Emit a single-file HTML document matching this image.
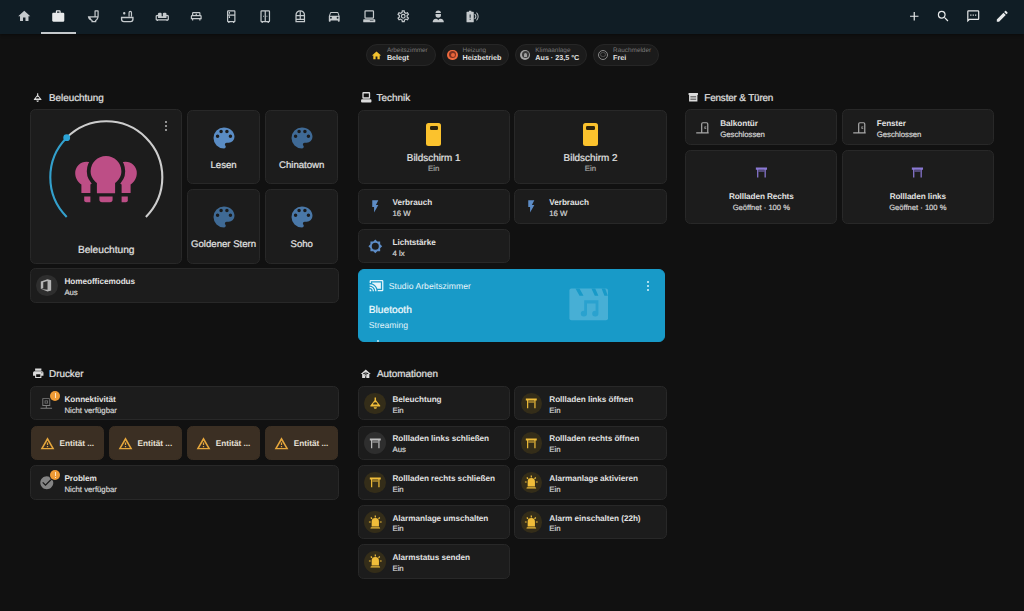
<!DOCTYPE html><html><head><meta charset="utf-8"><style>
html,body{margin:0;padding:0}
body{width:1024px;height:611px;background:#111111;position:relative;overflow:hidden;font-family:"Liberation Sans", sans-serif}
.t{position:absolute;white-space:nowrap;text-rendering:geometricPrecision}
.m{-webkit-text-stroke:0.22px currentColor}
.c{position:absolute;box-sizing:border-box;border:1px solid #2a2a2a}
.i{position:absolute;overflow:visible}
</style></head><body>
<div style="position:absolute;left:0;top:0;width:1024px;height:34px;background:#101d25;box-shadow:0 1px 3px rgba(0,0,0,0.45)"></div>
<svg class="i" style="left:16.95px;top:9.25px;width:14.5px;height:14.5px" viewBox="0 0 24 24"><path fill="#c5cacd" fill-rule="evenodd" d="M10,20V14H14V20H19V12H22L12,3L2,12H5V20H10Z"/></svg>
<svg class="i" style="left:51.35px;top:9.25px;width:14.5px;height:14.5px" viewBox="0 0 24 24"><path fill="#e8eaeb" fill-rule="evenodd" d="M10,2H14A2,2 0 0,1 16,4V6H20A2,2 0 0,1 22,8V19A2,2 0 0,1 20,21H4C2.89,21 2,20.1 2,19V8C2,6.89 2.89,6 4,6H8V4C8,2.89 8.89,2 10,2M14,6V4H10V6H14Z"/></svg>
<svg class="i" style="left:85.75px;top:9.25px;width:14.5px;height:14.5px" viewBox="0 0 24 24"><path fill="#c5cacd" fill-rule="evenodd" d="M9,22H17V19.5C19.4,17.9 21,15.1 21,12V3.5C21,2.7 20.3,2 19.5,2H15.5C14.7,2 14,2.7 14,3.5V12H3C3,15.1 5,18 9,19.5V22M5.3,14H18.7C18.1,15.9 16.8,17.5 15,18.3V20H11V18.3C9.2,17.5 7.9,15.9 7.3,14H5.3M16,4H19V12H16V4Z"/></svg>
<svg class="i" style="left:120.25px;top:9.25px;width:14.5px;height:14.5px" viewBox="0 0 24 24"><path fill="#c5cacd" fill-rule="evenodd" d="M7,5A2,2 0 1,1 7,9A2,2 0 1,1 7,5ZM14,12.5V6A3,3 0 0,1 20,6V12.5H18V6A1,1 0 0,0 16,6V12.5ZM1.5,13H22.5V17A5,5 0 0,1 17.5,22H6.5A5,5 0 0,1 1.5,17ZM3.7,15.2V17A2.8,2.8 0 0,0 6.5,19.8H17.5A2.8,2.8 0 0,0 20.3,17V15.2Z"/></svg>
<svg class="i" style="left:154.75px;top:9.25px;width:14.5px;height:14.5px" viewBox="0 0 24 24"><path fill="#c5cacd" fill-rule="evenodd" d="M7,6H9A2,2 0 0,1 11,8V12H13V8A2,2 0 0,1 15,6H17A2,2 0 0,1 19,8V10A2,2 0 0,1 21,10A2,2 0 0,1 23,12V17A2,2 0 0,1 21,19V20H19V19H5V20H3V19A2,2 0 0,1 1,17V12A2,2 0 0,1 3,10A2,2 0 0,1 5,10V8A2,2 0 0,1 7,6M3,12V17H21V12H19V15H5V12H3Z"/></svg>
<svg class="i" style="left:189.25px;top:9.25px;width:14.5px;height:14.5px" viewBox="0 0 24 24"><path fill="#c5cacd" fill-rule="evenodd" d="M7,5H17A2,2 0 0,1 19,7V10A2,2 0 0,1 21,12V17H19V19H17V17H7V19H5V17H3V12A2,2 0 0,1 5,10V7A2,2 0 0,1 7,5M7,7V10H11V8H13V10H17V7H7M5,12V15H19V12H5Z"/></svg>
<svg class="i" style="left:223.75px;top:9.25px;width:14.5px;height:14.5px" viewBox="0 0 24 24"><path fill="#c5cacd" fill-rule="evenodd" d="M7,2H17A2,2 0 0,1 19,4V20A2,2 0 0,1 17,22V23H15V22H9V23H7V22A2,2 0 0,1 5,20V4A2,2 0 0,1 7,2M7,4V9H17V4H7M7,11V20H17V11H7M8,5H10V8H8V5M8,12H10V15H8V12Z"/></svg>
<svg class="i" style="left:258.25px;top:9.25px;width:14.5px;height:14.5px" viewBox="0 0 24 24"><path fill="#c5cacd" fill-rule="evenodd" d="M6,2H18A2,2 0 0,1 20,4V20A2,2 0 0,1 18,22V23H16V22H8V23H6V22A2,2 0 0,1 4,20V4A2,2 0 0,1 6,2M6,4V20H11V4H6M13,4V20H18V4H13M8.5,11H10V13H8.5V11M14,11H15.5V13H14V11Z"/></svg>
<svg class="i" style="left:292.75px;top:9.25px;width:14.5px;height:14.5px" viewBox="0 0 24 24"><path fill="#c5cacd" fill-rule="evenodd" d="M12,2A8,8 0 0,0 4,10V22H20V10A8,8 0 0,0 12,2M11,4.1V10H6.1A6,6 0 0,1 11,4.1M13,4.1A6,6 0 0,1 17.9,10H13V4.1M6,12H11V16H6V12M13,12H18V16H13V12M6,18H18V20H6V18Z"/></svg>
<svg class="i" style="left:327.25px;top:9.25px;width:14.5px;height:14.5px" viewBox="0 0 24 24"><path fill="#c5cacd" fill-rule="evenodd" d="M5,11L6.5,6.5H17.5L19,11M17.5,16A1.5,1.5 0 0,1 16,14.5A1.5,1.5 0 0,1 17.5,13A1.5,1.5 0 0,1 19,14.5A1.5,1.5 0 0,1 17.5,16M6.5,16A1.5,1.5 0 0,1 5,14.5A1.5,1.5 0 0,1 6.5,13A1.5,1.5 0 0,1 8,14.5A1.5,1.5 0 0,1 6.5,16M18.92,6C18.72,5.42 18.16,5 17.5,5H6.5C5.84,5 5.28,5.42 5.08,6L3,12V20A1,1 0 0,0 4,21H5A1,1 0 0,0 6,20V19H18V20A1,1 0 0,0 19,21H20A1,1 0 0,0 21,20V12L18.92,6Z"/></svg>
<svg class="i" style="left:361.75px;top:9.25px;width:14.5px;height:14.5px" viewBox="0 0 24 24"><path fill="#c5cacd" fill-rule="evenodd" d="M6,2H18A2,2 0 0,1 20,4V14A2,2 0 0,1 18,16H6A2,2 0 0,1 4,14V4A2,2 0 0,1 6,2M6,4V14H18V4H6M3,17H21A1,1 0 0,1 22,18V21A1,1 0 0,1 21,22H3A1,1 0 0,1 2,21V18A1,1 0 0,1 3,17M13,19V20H19V19H13Z"/></svg>
<svg class="i" style="left:396.25px;top:9.25px;width:14.5px;height:14.5px" viewBox="0 0 24 24"><path fill="#c5cacd" fill-rule="evenodd" d="M12,8A4,4 0 0,1 16,12A4,4 0 0,1 12,16A4,4 0 0,1 8,12A4,4 0 0,1 12,8M12,10A2,2 0 0,0 10,12A2,2 0 0,0 12,14A2,2 0 0,0 14,12A2,2 0 0,0 12,10M10,22C9.75,22 9.54,21.82 9.5,21.58L9.13,18.93C8.5,18.68 7.96,18.34 7.44,17.94L4.95,18.95C4.73,19.03 4.46,18.95 4.34,18.73L2.34,15.27C2.21,15.05 2.27,14.78 2.46,14.63L4.57,12.97L4.5,12L4.57,11L2.46,9.37C2.27,9.22 2.21,8.95 2.34,8.73L4.34,5.27C4.46,5.05 4.73,4.96 4.95,5.05L7.44,6.05C7.96,5.66 8.5,5.32 9.13,5.07L9.5,2.42C9.54,2.18 9.75,2 10,2H14C14.25,2 14.46,2.18 14.5,2.42L14.87,5.07C15.5,5.32 16.04,5.66 16.56,6.05L19.05,5.05C19.27,4.96 19.54,5.05 19.66,5.27L21.66,8.73C21.79,8.95 21.73,9.22 21.54,9.37L19.43,11L19.5,12L19.43,13L21.54,14.63C21.73,14.78 21.79,15.05 21.66,15.27L19.66,18.73C19.54,18.95 19.27,19.04 19.05,18.95L16.56,17.95C16.04,18.34 15.5,18.68 14.87,18.93L14.5,21.58C14.46,21.82 14.25,22 14,22H10M11.25,4L10.88,6.61C9.68,6.86 8.62,7.5 7.85,8.39L5.44,7.35L4.69,8.65L6.8,10.2C6.4,11.37 6.4,12.64 6.8,13.8L4.68,15.36L5.43,16.66L7.86,15.62C8.63,16.5 9.68,17.14 10.87,17.38L11.24,20H12.76L13.13,17.39C14.32,17.14 15.37,16.5 16.14,15.62L18.57,16.66L19.32,15.36L17.2,13.81C17.6,12.64 17.6,11.37 17.2,10.2L19.31,8.65L18.56,7.35L16.15,8.39C15.38,7.5 14.32,6.86 13.12,6.62L12.75,4H11.25Z"/></svg>
<svg class="i" style="left:430.75px;top:9.25px;width:14.5px;height:14.5px" viewBox="0 0 24 24"><path fill="#c5cacd" fill-rule="evenodd" d="M12,2.5A4.5,4.5 0 0,1 16.5,7V10A4.5,4.5 0 0,1 12,14.5A4.5,4.5 0 0,1 7.5,10V7A4.5,4.5 0 0,1 12,2.5ZM7.5,6.8V8.2H16.5V6.8ZM2.8,22A5.2,5.2 0 0,1 8.2,16.3A4.2,4.2 0 0,1 12,18.6A4.2,4.2 0 0,1 15.8,16.3A5.2,5.2 0 0,1 21.2,22Z"/></svg>
<svg class="i" style="left:465.25px;top:9.25px;width:14.5px;height:14.5px" viewBox="0 0 24 24"><path fill="#c5cacd" fill-rule="evenodd" d="M3.5,4.5H6.5V2.8H10.5V4.5H13.5A1,1 0 0,1 14.5,5.5V21A1,1 0 0,1 13.5,22H3.5A1,1 0 0,1 2.5,21V5.5A1,1 0 0,1 3.5,4.5ZM7.7,9V14.5H9.3V9ZM7.7,16.2V17.8H9.3V16.2ZM16.5,8C18,9.2 18.8,10.8 18.8,12.5C18.8,14.2 18,15.8 16.5,17L15.5,15.9C16.6,15 17.2,13.8 17.2,12.5C17.2,11.2 16.6,10 15.5,9.1ZM19.5,5.5C21.5,7.3 22.5,9.8 22.5,12.5C22.5,15.2 21.5,17.7 19.5,19.5L18.4,18.4C20.1,16.9 20.9,14.8 20.9,12.5C20.9,10.2 20.1,8.1 18.4,6.6Z"/></svg>
<div style="position:absolute;left:41px;top:32px;width:35px;height:2px;background:#c4c8cb"></div>
<svg class="i" style="left:906.55px;top:9.35px;width:14.5px;height:14.5px" viewBox="0 0 24 24"><path fill="#e6e8e9" fill-rule="evenodd" d="M19,13H13V19H11V13H5V11H11V5H13V11H19V13Z"/></svg>
<svg class="i" style="left:935.75px;top:9.35px;width:14.5px;height:14.5px" viewBox="0 0 24 24"><path fill="#e6e8e9" fill-rule="evenodd" d="M9.5,3A6.5,6.5 0 0,1 16,9.5C16,11.11 15.41,12.59 14.44,13.73L14.71,14H15.5L20.5,19L19,20.5L14,15.5V14.71L13.73,14.44C12.59,15.41 11.11,16 9.5,16A6.5,6.5 0 0,1 3,9.5A6.5,6.5 0 0,1 9.5,3M9.5,5C7,5 5,7 5,9.5C5,12 7,14 9.5,14C12,14 14,12 14,9.5C14,7 12,5 9.5,5Z"/></svg>
<svg class="i" style="left:965.75px;top:9.35px;width:14.5px;height:14.5px" viewBox="0 0 24 24"><path fill="#e6e8e9" fill-rule="evenodd" d="M20,2H4A2,2 0 0,0 2,4V22L6,18H20A2,2 0 0,0 22,16V4A2,2 0 0,0 20,2M20,16H5.17L4,17.17V4H20V16M17,11H15V9H17V11M13,11H11V9H13V11M9,11H7V9H9V11Z"/></svg>
<svg class="i" style="left:994.95px;top:9.35px;width:14.5px;height:14.5px" viewBox="0 0 24 24"><path fill="#e6e8e9" fill-rule="evenodd" d="M20.71,7.04C21.1,6.65 21.1,6 20.71,5.63L18.37,3.29C18,2.9 17.35,2.9 16.96,3.29L15.12,5.12L18.87,8.87M3,17.25V21H6.75L17.81,9.93L14.06,6.18L3,17.25Z"/></svg>
<div class="c" style="left:366.3px;top:44.4px;width:69.5px;height:21.4px;border-radius:11px;background:#1b1b1b;border-color:#262626"></div>
<svg class="i" style="left:371.30px;top:49.50px;width:11px;height:11px" viewBox="0 0 24 24"><path fill="#f2c12e" fill-rule="evenodd" d="M10,20V14H14V20H19V12H22L12,3L2,12H5V20H10Z"/></svg>
<div class="t" style="left:386.90px;top:48.00px;font-size:6.4px;line-height:6.4px;color:#7a7a7a;font-weight:400;letter-spacing:0px;">Arbeitszimmer</div>
<div class="t" style="left:386.90px;top:54.00px;font-size:7.2px;line-height:7.2px;color:#e4e4e4;font-weight:700;letter-spacing:0px;">Belegt</div>
<div class="c" style="left:442.0px;top:44.4px;width:67.2px;height:21.4px;border-radius:11px;background:#1b1b1b;border-color:#262626"></div>
<div class="c" style="left:447.40px;top:49.70px;width:10.20px;height:10.20px;background:#ee6a3e;border:none;border-radius:50%"></div>
<div class="c" style="left:448.90px;top:51.20px;width:7.20px;height:7.20px;background:#7a3020;border:none;border-radius:50%"></div>
<div class="c" style="left:450.50px;top:53.20px;width:4.00px;height:4.00px;background:#e8643a;border:none;border-radius:50%"></div>
<div class="t" style="left:462.60px;top:48.00px;font-size:6.4px;line-height:6.4px;color:#7a7a7a;font-weight:400;letter-spacing:0px;">Heizung</div>
<div class="t" style="left:462.60px;top:54.00px;font-size:7.2px;line-height:7.2px;color:#e4e4e4;font-weight:700;letter-spacing:0px;">Heizbetrieb</div>
<div class="c" style="left:514.7px;top:44.4px;width:72.3px;height:21.4px;border-radius:11px;background:#1b1b1b;border-color:#262626"></div>
<div class="c" style="left:520.10px;top:49.70px;width:10.20px;height:10.20px;background:#a4a4a4;border:none;border-radius:50%"></div>
<div class="c" style="left:521.70px;top:51.30px;width:7.00px;height:7.00px;background:#3a3a3a;border:none;border-radius:50%"></div>
<div class="c" style="left:523.70px;top:52.6px;width:3px;height:4.6px;border-radius:1.5px 1.5px 0.6px 0.6px;background:#a0a0a0;border:none"></div>
<div class="t" style="left:535.30px;top:48.00px;font-size:6.4px;line-height:6.4px;color:#7a7a7a;font-weight:400;letter-spacing:0px;">Klimaanlage</div>
<div class="t" style="left:535.30px;top:54.00px;font-size:7.2px;line-height:7.2px;color:#e4e4e4;font-weight:700;letter-spacing:0px;">Aus · 23,5 °C</div>
<div class="c" style="left:592.5px;top:44.4px;width:66.4px;height:21.4px;border-radius:11px;background:#1b1b1b;border-color:#262626"></div>
<div class="c" style="left:597.90px;top:49.7px;width:10.2px;height:10.2px;border-radius:50%;border:1.3px solid #8a8a8a;background:transparent"></div>
<div class="c" style="left:600.40px;top:52.2px;width:5.2px;height:5.2px;border-radius:50%;border:1px solid #505050;background:transparent"></div>
<div class="t" style="left:613.10px;top:48.00px;font-size:6.4px;line-height:6.4px;color:#7a7a7a;font-weight:400;letter-spacing:0px;">Rauchmelder</div>
<div class="t" style="left:613.10px;top:54.00px;font-size:7.2px;line-height:7.2px;color:#e4e4e4;font-weight:700;letter-spacing:0px;">Frei</div>
<svg class="i" style="left:32.45px;top:91.55px;width:11.3px;height:11.3px" viewBox="0 0 24 24"><path fill="#dcdcdc" fill-rule="evenodd" d="M10.8,2.5H13.2V7L20,15.6C20.5,16.3 20.1,17.2 19.2,17.2H4.8C3.9,17.2 3.5,16.3 4,15.6L10.8,7V2.5M12,10.3C10.1,10.3 8.6,11.8 8.3,13.9H15.7C15.4,11.8 13.9,10.3 12,10.3M9.3,18.3H14.7A2.7,2.7 0 0,1 12,21A2.7,2.7 0 0,1 9.3,18.3Z"/></svg>
<div class="t m" style="left:48.90px;top:94.00px;font-size:9.9px;line-height:9.9px;color:#e1e1e1;font-weight:400;letter-spacing:0px;">Beleuchtung</div>
<svg class="i" style="left:359.85px;top:91.15px;width:12.5px;height:12.5px" viewBox="0 0 24 24"><path fill="#dcdcdc" fill-rule="evenodd" d="M6.5,2H17.5A2,2 0 0,1 19.5,4V13A2,2 0 0,1 17.5,15H6.5A2,2 0 0,1 4.5,13V4A2,2 0 0,1 6.5,2M7,5V12H17V5H7M4,16H20A2,2 0 0,1 22,18V20A2,2 0 0,1 20,22H4A2,2 0 0,1 2,20V18A2,2 0 0,1 4,16Z"/></svg>
<div class="t m" style="left:376.60px;top:94.00px;font-size:9.9px;line-height:9.9px;color:#e1e1e1;font-weight:400;letter-spacing:0px;">Technik</div>
<svg class="i" style="left:687.35px;top:91.45px;width:12.5px;height:12.5px" viewBox="0 0 24 24"><path fill="#dcdcdc" fill-rule="evenodd" d="M3,4H21V7.5H20V20H4V7.5H3V4M6.5,10V11H17.5V10H6.5M6.5,13V14H17.5V13H6.5M6.5,16V17H17.5V16H6.5Z"/></svg>
<div class="t m" style="left:704.30px;top:94.00px;font-size:9.9px;line-height:9.9px;color:#e1e1e1;font-weight:400;letter-spacing:-0.15px;">Fenster &amp; Türen</div>
<svg class="i" style="left:31.85px;top:367.05px;width:12.5px;height:12.5px" viewBox="0 0 24 24"><path fill="#dcdcdc" fill-rule="evenodd" d="M18,3H6V7H18M19,12A1,1 0 0,1 18,11A1,1 0 0,1 19,10A1,1 0 0,1 20,11A1,1 0 0,1 19,12M16,19H8V14H16M19,8H5A3,3 0 0,0 2,11V17H6V21H18V17H22V11A3,3 0 0,0 19,8Z"/></svg>
<div class="t m" style="left:49.00px;top:370.00px;font-size:9.9px;line-height:9.9px;color:#e1e1e1;font-weight:400;letter-spacing:0px;">Drucker</div>
<svg class="i" style="left:360.05px;top:367.55px;width:11.5px;height:11.5px" viewBox="0 0 24 24"><path fill="#dcdcdc" fill-rule="evenodd" d="M12,3L1.5,12.5H4.5V21H19.5V12.5H22.5L12,3M12,9.5C14.3,9.5 16.4,10.4 17.9,11.9L16.5,13.3C15.3,12.2 13.7,11.5 12,11.5C10.3,11.5 8.7,12.2 7.5,13.3L6.1,11.9C7.6,10.4 9.7,9.5 12,9.5M12,13.2C13.2,13.2 14.3,13.7 15.1,14.5L13.7,15.9C13.3,15.5 12.7,15.2 12,15.2C11.3,15.2 10.7,15.5 10.3,15.9L8.9,14.5C9.7,13.7 10.8,13.2 12,13.2M10.8,17H13.2V21H10.8V17Z"/></svg>
<div class="t m" style="left:377.00px;top:370.00px;font-size:9.9px;line-height:9.9px;color:#e1e1e1;font-weight:400;letter-spacing:0px;">Automationen</div>
<div class="c" style="left:29.50px;top:109.30px;width:152.20px;height:154.30px;background:#1c1c1c;border-color:#282828;border-radius:5.5px;"></div>
<svg class="i" style="left:0.00px;top:0.00px;width:1024px;height:611px;left:0;top:0" viewBox="0 0 1024 611"><path d="M66.70,216.90 A56,56 0 0,1 66.70,137.70" stroke="#33a0cc" stroke-width="2.1" fill="none"/><path d="M66.70,137.70 A56,56 0 1,1 145.90,216.90" stroke="#cdcdcd" stroke-width="2.1" fill="none"/><circle cx="66.70" cy="137.70" r="3.4" fill="#2ba3d6"/></svg>
<div class="c" style="left:165.10px;top:121.20px;width:2.20px;height:2.20px;background:#b8b8b8;border:none;border-radius:50%"></div>
<div class="c" style="left:165.10px;top:124.90px;width:2.20px;height:2.20px;background:#b8b8b8;border:none;border-radius:50%"></div>
<div class="c" style="left:165.10px;top:128.60px;width:2.20px;height:2.20px;background:#b8b8b8;border:none;border-radius:50%"></div>
<svg class="i" style="left:0.00px;top:0.00px;width:1024px;height:611px;left:0;top:0" viewBox="0 0 1024 611">
<g fill="#bd4e86">
 <path d="M81.4,193 V184.5 C77.5,182 75.2,177.8 75.2,173 A11.3,11.3 0 0,1 97.8,173 C97.8,177 95,181 90.4,184.5 V193 Z"/>
 <path d="M130.6,193 V184.5 C134.5,182 136.8,177.8 136.8,173 A11.3,11.3 0 0,0 114.2,173 C114.2,177 117,181 121.6,184.5 V193 Z"/>
 <path d="M84.2,196.5 H90.4 V202.2 H86.2 A2,2 0 0,1 84.2,200.2 Z"/>
 <path d="M127.8,196.5 H121.6 V202.2 H125.8 A2,2 0 0,0 127.8,200.2 Z"/>
</g>
<path d="M106,155.9 A15.4,15.4 0 0,1 121.4,171.3 C121.4,176.5 118.5,180.5 115.1,183 V193.2 H96.9 V183 C93.5,180.5 90.6,176.5 90.6,171.3 A15.4,15.4 0 0,1 106,155.9 Z" fill="#bd4e86" stroke="#1c1c1c" stroke-width="7.6" paint-order="stroke"/>
<path d="M99.4,196.5 H112.6 V199.5 A2.7,2.7 0 0,1 109.9,202.2 H102.1 A2.7,2.7 0 0,1 99.4,199.5 Z" fill="#bd4e86"/>
</svg>
<div class="t m" style="left:-43.80px;width:300px;text-align:center;top:246.00px;font-size:10.2px;line-height:10.2px;color:#e1e1e1;font-weight:400;letter-spacing:0px;">Beleuchtung</div>
<div class="c" style="left:186.80px;top:109.80px;width:73.60px;height:74.60px;background:#1c1c1c;border-color:#282828;border-radius:5.5px;"></div>
<svg class="i" style="left:209.60px;top:124.00px;width:28px;height:28px" viewBox="0 0 24 24"><path fill="#5a8cc4" fill-rule="evenodd" d="M17.5,12A1.5,1.5 0 0,1 16,10.5A1.5,1.5 0 0,1 17.5,9A1.5,1.5 0 0,1 19,10.5A1.5,1.5 0 0,1 17.5,12M14.5,8A1.5,1.5 0 0,1 13,6.5A1.5,1.5 0 0,1 14.5,5A1.5,1.5 0 0,1 16,6.5A1.5,1.5 0 0,1 14.5,8M9.5,8A1.5,1.5 0 0,1 8,6.5A1.5,1.5 0 0,1 9.5,5A1.5,1.5 0 0,1 11,6.5A1.5,1.5 0 0,1 9.5,8M6.5,12A1.5,1.5 0 0,1 5,10.5A1.5,1.5 0 0,1 6.5,9A1.5,1.5 0 0,1 8,10.5A1.5,1.5 0 0,1 6.5,12M12,3A9,9 0 0,0 3,12A9,9 0 0,0 12,21A1.5,1.5 0 0,0 13.5,19.5C13.5,19.11 13.35,18.76 13.11,18.5C12.88,18.23 12.73,17.88 12.73,17.5A1.5,1.5 0 0,1 14.23,16H16A5,5 0 0,0 21,11C21,6.58 16.97,3 12,3Z"/></svg>
<div class="t m" style="left:73.60px;width:300px;text-align:center;top:161.00px;font-size:9.6px;line-height:9.6px;color:#e1e1e1;font-weight:400;letter-spacing:0px;">Lesen</div>
<div class="c" style="left:264.90px;top:109.80px;width:73.60px;height:74.60px;background:#1c1c1c;border-color:#282828;border-radius:5.5px;"></div>
<svg class="i" style="left:287.70px;top:124.00px;width:28px;height:28px" viewBox="0 0 24 24"><path fill="#3f6a96" fill-rule="evenodd" d="M17.5,12A1.5,1.5 0 0,1 16,10.5A1.5,1.5 0 0,1 17.5,9A1.5,1.5 0 0,1 19,10.5A1.5,1.5 0 0,1 17.5,12M14.5,8A1.5,1.5 0 0,1 13,6.5A1.5,1.5 0 0,1 14.5,5A1.5,1.5 0 0,1 16,6.5A1.5,1.5 0 0,1 14.5,8M9.5,8A1.5,1.5 0 0,1 8,6.5A1.5,1.5 0 0,1 9.5,5A1.5,1.5 0 0,1 11,6.5A1.5,1.5 0 0,1 9.5,8M6.5,12A1.5,1.5 0 0,1 5,10.5A1.5,1.5 0 0,1 6.5,9A1.5,1.5 0 0,1 8,10.5A1.5,1.5 0 0,1 6.5,12M12,3A9,9 0 0,0 3,12A9,9 0 0,0 12,21A1.5,1.5 0 0,0 13.5,19.5C13.5,19.11 13.35,18.76 13.11,18.5C12.88,18.23 12.73,17.88 12.73,17.5A1.5,1.5 0 0,1 14.23,16H16A5,5 0 0,0 21,11C21,6.58 16.97,3 12,3Z"/></svg>
<div class="t m" style="left:151.70px;width:300px;text-align:center;top:161.00px;font-size:9.6px;line-height:9.6px;color:#e1e1e1;font-weight:400;letter-spacing:0px;">Chinatown</div>
<div class="c" style="left:186.80px;top:189.00px;width:73.60px;height:74.60px;background:#1c1c1c;border-color:#282828;border-radius:5.5px;"></div>
<svg class="i" style="left:209.60px;top:203.20px;width:28px;height:28px" viewBox="0 0 24 24"><path fill="#3f6a95" fill-rule="evenodd" d="M17.5,12A1.5,1.5 0 0,1 16,10.5A1.5,1.5 0 0,1 17.5,9A1.5,1.5 0 0,1 19,10.5A1.5,1.5 0 0,1 17.5,12M14.5,8A1.5,1.5 0 0,1 13,6.5A1.5,1.5 0 0,1 14.5,5A1.5,1.5 0 0,1 16,6.5A1.5,1.5 0 0,1 14.5,8M9.5,8A1.5,1.5 0 0,1 8,6.5A1.5,1.5 0 0,1 9.5,5A1.5,1.5 0 0,1 11,6.5A1.5,1.5 0 0,1 9.5,8M6.5,12A1.5,1.5 0 0,1 5,10.5A1.5,1.5 0 0,1 6.5,9A1.5,1.5 0 0,1 8,10.5A1.5,1.5 0 0,1 6.5,12M12,3A9,9 0 0,0 3,12A9,9 0 0,0 12,21A1.5,1.5 0 0,0 13.5,19.5C13.5,19.11 13.35,18.76 13.11,18.5C12.88,18.23 12.73,17.88 12.73,17.5A1.5,1.5 0 0,1 14.23,16H16A5,5 0 0,0 21,11C21,6.58 16.97,3 12,3Z"/></svg>
<div class="t m" style="left:73.60px;width:300px;text-align:center;top:240.00px;font-size:9.6px;line-height:9.6px;color:#e1e1e1;font-weight:400;letter-spacing:0px;">Goldener Stern</div>
<div class="c" style="left:264.90px;top:189.00px;width:73.60px;height:74.60px;background:#1c1c1c;border-color:#282828;border-radius:5.5px;"></div>
<svg class="i" style="left:287.70px;top:203.20px;width:28px;height:28px" viewBox="0 0 24 24"><path fill="#4a78a8" fill-rule="evenodd" d="M17.5,12A1.5,1.5 0 0,1 16,10.5A1.5,1.5 0 0,1 17.5,9A1.5,1.5 0 0,1 19,10.5A1.5,1.5 0 0,1 17.5,12M14.5,8A1.5,1.5 0 0,1 13,6.5A1.5,1.5 0 0,1 14.5,5A1.5,1.5 0 0,1 16,6.5A1.5,1.5 0 0,1 14.5,8M9.5,8A1.5,1.5 0 0,1 8,6.5A1.5,1.5 0 0,1 9.5,5A1.5,1.5 0 0,1 11,6.5A1.5,1.5 0 0,1 9.5,8M6.5,12A1.5,1.5 0 0,1 5,10.5A1.5,1.5 0 0,1 6.5,9A1.5,1.5 0 0,1 8,10.5A1.5,1.5 0 0,1 6.5,12M12,3A9,9 0 0,0 3,12A9,9 0 0,0 12,21A1.5,1.5 0 0,0 13.5,19.5C13.5,19.11 13.35,18.76 13.11,18.5C12.88,18.23 12.73,17.88 12.73,17.5A1.5,1.5 0 0,1 14.23,16H16A5,5 0 0,0 21,11C21,6.58 16.97,3 12,3Z"/></svg>
<div class="t m" style="left:151.70px;width:300px;text-align:center;top:240.00px;font-size:9.6px;line-height:9.6px;color:#e1e1e1;font-weight:400;letter-spacing:0px;">Soho</div>
<div class="c" style="left:29.50px;top:268.30px;width:309.00px;height:34.30px;background:#1c1c1c;border-color:#282828;border-radius:5.5px;"></div>
<div class="c" style="left:35.80px;top:274.70px;width:21.80px;height:21.80px;background:#2e2e2e;border:none;border-radius:50%"></div>
<svg class="i" style="left:39.40px;top:278.30px;width:14.6px;height:14.6px" viewBox="0 0 24 24"><path fill="#b4b4b4" fill-rule="evenodd" d="M3,18L7,16.75V7L14,5V19.5L3.5,18.25L14,22L20,20.75V3.5L13.95,2L3,5.75V18Z"/></svg>
<div class="t" style="left:64.40px;top:278.00px;font-size:8.2px;line-height:8.2px;color:#e1e1e1;font-weight:700;letter-spacing:-0.05px;">Homeofficemodus</div>
<div class="t m" style="left:64.40px;top:289.00px;font-size:7.8px;line-height:7.8px;color:#d2d2d2;font-weight:400;letter-spacing:-0.03px;">Aus</div>
<div class="c" style="left:29.50px;top:385.70px;width:309.00px;height:34.30px;background:#1c1c1c;border-color:#282828;border-radius:5.5px;"></div>
<svg class="i" style="left:39.40px;top:396.30px;width:14.6px;height:14.6px" viewBox="0 0 24 24"><path fill="#7e7e7e" fill-rule="evenodd" d="M5.5,3.5H18.5V16.5H12.8V19.5H21.5V20.8H2.5V19.5H11.2V16.5H5.5V3.5ZM7,5V15H17V5ZM9.3,7.5H14.7V12.5H9.3ZM10.5,8.7V11.3H13.5V8.7Z"/></svg>
<div class="c" style="left:49.20px;top:389.80px;width:12.00px;height:12.00px;background:#1c1c1c;border:none;border-radius:50%"></div>
<div class="c" style="left:50.20px;top:390.80px;width:10.00px;height:10.00px;background:#ee9b36;border:none;border-radius:50%"></div>
<div class="c" style="left:54.65px;top:393.20px;width:1.1px;height:3.4px;background:#fde2c0;border:none"></div>
<div class="c" style="left:54.65px;top:397.40px;width:1.1px;height:1.1px;background:#fde2c0;border:none"></div>
<div class="t" style="left:64.40px;top:396.00px;font-size:8.2px;line-height:8.2px;color:#e1e1e1;font-weight:700;letter-spacing:-0.05px;">Konnektivität</div>
<div class="t m" style="left:64.40px;top:407.00px;font-size:7.8px;line-height:7.8px;color:#d2d2d2;font-weight:400;letter-spacing:-0.03px;">Nicht verfügbar</div>
<div class="c" style="left:30.50px;top:426.30px;width:73.30px;height:34.00px;background:#3b2f23;border-color:#3b2f23;border-radius:5.5px;"></div>
<svg class="i" style="left:39.80px;top:435.50px;width:15px;height:15px" viewBox="0 0 24 24"><path fill="#e6a73c" fill-rule="evenodd" d="M12,2L1,21H23ZM12,7.3L5,19H19ZM11,10.5H13V14.5H11ZM11,16H13V18H11Z"/></svg>
<div class="t" style="left:59.50px;top:440.00px;font-size:8.2px;line-height:8.2px;color:#e8e0d6;font-weight:700;letter-spacing:0px;">Entität ...</div>
<div class="c" style="left:108.60px;top:426.30px;width:73.30px;height:34.00px;background:#3b2f23;border-color:#3b2f23;border-radius:5.5px;"></div>
<svg class="i" style="left:117.90px;top:435.50px;width:15px;height:15px" viewBox="0 0 24 24"><path fill="#e6a73c" fill-rule="evenodd" d="M12,2L1,21H23ZM12,7.3L5,19H19ZM11,10.5H13V14.5H11ZM11,16H13V18H11Z"/></svg>
<div class="t" style="left:137.60px;top:440.00px;font-size:8.2px;line-height:8.2px;color:#e8e0d6;font-weight:700;letter-spacing:0px;">Entität ...</div>
<div class="c" style="left:186.70px;top:426.30px;width:73.30px;height:34.00px;background:#3b2f23;border-color:#3b2f23;border-radius:5.5px;"></div>
<svg class="i" style="left:196.00px;top:435.50px;width:15px;height:15px" viewBox="0 0 24 24"><path fill="#e6a73c" fill-rule="evenodd" d="M12,2L1,21H23ZM12,7.3L5,19H19ZM11,10.5H13V14.5H11ZM11,16H13V18H11Z"/></svg>
<div class="t" style="left:215.70px;top:440.00px;font-size:8.2px;line-height:8.2px;color:#e8e0d6;font-weight:700;letter-spacing:0px;">Entität ...</div>
<div class="c" style="left:264.80px;top:426.30px;width:73.30px;height:34.00px;background:#3b2f23;border-color:#3b2f23;border-radius:5.5px;"></div>
<svg class="i" style="left:274.10px;top:435.50px;width:15px;height:15px" viewBox="0 0 24 24"><path fill="#e6a73c" fill-rule="evenodd" d="M12,2L1,21H23ZM12,7.3L5,19H19ZM11,10.5H13V14.5H11ZM11,16H13V18H11Z"/></svg>
<div class="t" style="left:293.80px;top:440.00px;font-size:8.2px;line-height:8.2px;color:#e8e0d6;font-weight:700;letter-spacing:0px;">Entität ...</div>
<div class="c" style="left:29.50px;top:465.40px;width:309.00px;height:34.30px;background:#1c1c1c;border-color:#282828;border-radius:5.5px;"></div>
<svg class="i" style="left:38.90px;top:474.90px;width:15.6px;height:15.6px" viewBox="0 0 24 24"><path fill="#858585" fill-rule="evenodd" d="M12 2C6.5 2 2 6.5 2 12S6.5 22 12 22 22 17.5 22 12 17.5 2 12 2M10 17L5 12L6.41 10.59L10 14.17L17.59 6.58L19 8L10 17Z"/></svg>
<div class="c" style="left:49.20px;top:468.90px;width:12.00px;height:12.00px;background:#1c1c1c;border:none;border-radius:50%"></div>
<div class="c" style="left:50.20px;top:469.90px;width:10.00px;height:10.00px;background:#ee9b36;border:none;border-radius:50%"></div>
<div class="c" style="left:54.65px;top:472.30px;width:1.1px;height:3.4px;background:#fde2c0;border:none"></div>
<div class="c" style="left:54.65px;top:476.50px;width:1.1px;height:1.1px;background:#fde2c0;border:none"></div>
<div class="t" style="left:64.40px;top:475.00px;font-size:8.2px;line-height:8.2px;color:#e1e1e1;font-weight:700;letter-spacing:-0.05px;">Problem</div>
<div class="t m" style="left:64.40px;top:486.00px;font-size:7.8px;line-height:7.8px;color:#d2d2d2;font-weight:400;letter-spacing:-0.03px;">Nicht verfügbar</div>
<div class="c" style="left:357.60px;top:109.80px;width:152.20px;height:74.60px;background:#1c1c1c;border-color:#282828;border-radius:5.5px;"></div>
<div class="c" style="left:425.90px;top:123px;width:15.6px;height:23.2px;border-radius:2.5px;background:#fbc22d;border:none"></div>
<div class="c" style="left:429.60px;top:126.3px;width:8.2px;height:3.4px;border-radius:1.3px;background:#2e240c;border:none"></div>
<div class="t m" style="left:283.70px;width:300px;text-align:center;top:154.00px;font-size:9.9px;line-height:9.9px;color:#e1e1e1;font-weight:400;letter-spacing:0px;">Bildschirm 1</div>
<div class="t m" style="left:283.70px;width:300px;text-align:center;top:165.00px;font-size:7.8px;line-height:7.8px;color:#a4a4a4;font-weight:400;letter-spacing:0px;">Ein</div>
<div class="c" style="left:514.40px;top:109.80px;width:152.20px;height:74.60px;background:#1c1c1c;border-color:#282828;border-radius:5.5px;"></div>
<div class="c" style="left:582.70px;top:123px;width:15.6px;height:23.2px;border-radius:2.5px;background:#fbc22d;border:none"></div>
<div class="c" style="left:586.40px;top:126.3px;width:8.2px;height:3.4px;border-radius:1.3px;background:#2e240c;border:none"></div>
<div class="t m" style="left:440.50px;width:300px;text-align:center;top:154.00px;font-size:9.9px;line-height:9.9px;color:#e1e1e1;font-weight:400;letter-spacing:0px;">Bildschirm 2</div>
<div class="t m" style="left:440.50px;width:300px;text-align:center;top:165.00px;font-size:7.8px;line-height:7.8px;color:#a4a4a4;font-weight:400;letter-spacing:0px;">Ein</div>
<div class="c" style="left:357.60px;top:189.30px;width:152.20px;height:34.30px;background:#1c1c1c;border-color:#282828;border-radius:5.5px;"></div>
<svg class="i" style="left:367.50px;top:199.30px;width:14.6px;height:14.6px" viewBox="0 0 24 24"><path fill="#5d8cc6" fill-rule="evenodd" d="M7,2V13H10V22L17,10H13L17,2H7Z"/></svg>
<div class="t" style="left:392.50px;top:199.00px;font-size:8.2px;line-height:8.2px;color:#e1e1e1;font-weight:700;letter-spacing:-0.05px;">Verbrauch</div>
<div class="t m" style="left:392.50px;top:210.00px;font-size:7.8px;line-height:7.8px;color:#d2d2d2;font-weight:400;letter-spacing:-0.03px;">16 W</div>
<div class="c" style="left:514.40px;top:189.30px;width:152.20px;height:34.30px;background:#1c1c1c;border-color:#282828;border-radius:5.5px;"></div>
<svg class="i" style="left:524.30px;top:199.30px;width:14.6px;height:14.6px" viewBox="0 0 24 24"><path fill="#5d8cc6" fill-rule="evenodd" d="M7,2V13H10V22L17,10H13L17,2H7Z"/></svg>
<div class="t" style="left:549.30px;top:199.00px;font-size:8.2px;line-height:8.2px;color:#e1e1e1;font-weight:700;letter-spacing:-0.05px;">Verbrauch</div>
<div class="t m" style="left:549.30px;top:210.00px;font-size:7.8px;line-height:7.8px;color:#d2d2d2;font-weight:400;letter-spacing:-0.03px;">16 W</div>
<div class="c" style="left:357.60px;top:229.10px;width:152.20px;height:34.30px;background:#1c1c1c;border-color:#282828;border-radius:5.5px;"></div>
<svg class="i" style="left:367.50px;top:239.10px;width:14.6px;height:14.6px" viewBox="0 0 24 24"><path fill="#5d8cc6" fill-rule="evenodd" d="M20,15.31L23.31,12L20,8.69V4H15.31L12,0.69L8.69,4H4V8.69L0.69,12L4,15.31V20H8.69L12,23.31L15.31,20H20V15.31M12,6.2A5.8,5.8 0 0,0 6.2,12A5.8,5.8 0 0,0 12,17.8A5.8,5.8 0 0,0 17.8,12A5.8,5.8 0 0,0 12,6.2Z"/></svg>
<div class="t" style="left:392.50px;top:239.00px;font-size:8.2px;line-height:8.2px;color:#e1e1e1;font-weight:700;letter-spacing:-0.05px;">Lichtstärke</div>
<div class="t m" style="left:392.50px;top:250.00px;font-size:7.8px;line-height:7.8px;color:#d2d2d2;font-weight:400;letter-spacing:-0.03px;">4 lx</div>
<div class="c" style="left:358.00px;top:268.50px;width:307.40px;height:73.20px;background:#189ac8;border-color:#189ac8;border-radius:6px;"></div>
<svg class="i" style="left:368.50px;top:278.20px;width:15px;height:15px" viewBox="0 0 24 24"><path fill="#e8f6fb" fill-rule="evenodd" d="M21,3H3C1.89,3 1,3.89 1,5V8H3V5H21V19H14V21H21A2,2 0 0,0 23,19V5C23,3.89 22.1,3 21,3M1,10V12A9,9 0 0,1 10,21H12C12,14.92 7.07,10 1,10M19,7H5V8.63C8.96,9.91 12.09,13.04 13.37,17H19M1,14V16A5,5 0 0,1 6,21H8A7,7 0 0,0 1,14M1,18V21H4A3,3 0 0,0 1,18Z"/></svg>
<div class="t" style="left:388.80px;top:282.00px;font-size:8.6px;line-height:8.6px;color:#e8f6fb;font-weight:400;letter-spacing:0.05px;">Studio Arbeitszimmer</div>
<div class="t m" style="left:368.80px;top:306.00px;font-size:10.2px;line-height:10.2px;color:#f2fafd;font-weight:400;letter-spacing:0px;">Bluetooth</div>
<div class="t" style="left:368.80px;top:321.00px;font-size:8.6px;line-height:8.6px;color:#e0f2f9;font-weight:400;letter-spacing:0px;">Streaming</div>
<div class="c" style="left:377.10px;top:339.90px;width:1.80px;height:1.80px;background:#bfe9f8;border:none;border-radius:50%"></div>
<div class="c" style="left:647.15px;top:280.95px;width:2.30px;height:2.30px;background:#d8f3fd;border:none;border-radius:50%"></div>
<div class="c" style="left:647.15px;top:284.85px;width:2.30px;height:2.30px;background:#d8f3fd;border:none;border-radius:50%"></div>
<div class="c" style="left:647.15px;top:288.75px;width:2.30px;height:2.30px;background:#d8f3fd;border:none;border-radius:50%"></div>
<svg class="i" style="left:0.00px;top:0.00px;width:1024px;height:611px;left:0;top:0" viewBox="0 0 1024 611"><g>
<rect x="569.4" y="288.6" width="38.6" height="31.6" rx="2" fill="#47afd5"/>
<path d="M575.5,288.6H579.5L583.5,295.8H579.5Z M591.4,288.6H595.2L598.4,295.8H594.8Z M601.6,288.6H605.2L607.8,295.8H604.4Z" fill="#189ac8"/>
<path d="M584.2,300.2H598.4V313.5A3.1,2.8 0 1,1 595.6,310.8V303.6H587V313.5A3.1,2.8 0 1,1 584.2,310.8Z" fill="#2aa2cf"/>
</g></svg>
<div class="c" style="left:357.60px;top:386.10px;width:152.20px;height:34.40px;background:#1c1c1c;border-color:#282828;border-radius:5.5px;"></div>
<div class="c" style="left:363.90px;top:392.50px;width:21.80px;height:21.80px;background:#342d19;border:none;border-radius:50%"></div>
<svg class="i" style="left:367.50px;top:396.10px;width:14.6px;height:14.6px" viewBox="0 0 24 24"><path fill="#f0bd3a" fill-rule="evenodd" d="M10.8,2.5H13.2V7L20,15.6C20.5,16.3 20.1,17.2 19.2,17.2H4.8C3.9,17.2 3.5,16.3 4,15.6L10.8,7V2.5M12,10.3C10.1,10.3 8.6,11.8 8.3,13.9H15.7C15.4,11.8 13.9,10.3 12,10.3M9.3,18.3H14.7A2.7,2.7 0 0,1 12,21A2.7,2.7 0 0,1 9.3,18.3Z"/></svg>
<div class="t" style="left:392.50px;top:396.00px;font-size:8.2px;line-height:8.2px;color:#e1e1e1;font-weight:700;letter-spacing:-0.05px;">Beleuchtung</div>
<div class="t m" style="left:392.50px;top:407.00px;font-size:7.8px;line-height:7.8px;color:#d2d2d2;font-weight:400;letter-spacing:-0.03px;">Ein</div>
<div class="c" style="left:514.40px;top:386.10px;width:152.20px;height:34.40px;background:#1c1c1c;border-color:#282828;border-radius:5.5px;"></div>
<div class="c" style="left:520.70px;top:392.50px;width:21.80px;height:21.80px;background:#342d19;border:none;border-radius:50%"></div>
<svg class="i" style="left:524.30px;top:396.10px;width:14.6px;height:14.6px" viewBox="0 0 24 24"><path fill="#f0bd3a" fill-rule="evenodd" d="M3,4H21V7.5H19V20H17V7.5H7V20H5V7.5H3V4M7.5,9H16.5V10.5H7.5V9Z"/></svg>
<div class="t" style="left:549.30px;top:396.00px;font-size:8.2px;line-height:8.2px;color:#e1e1e1;font-weight:700;letter-spacing:-0.05px;">Rollladen links öffnen</div>
<div class="t m" style="left:549.30px;top:407.00px;font-size:7.8px;line-height:7.8px;color:#d2d2d2;font-weight:400;letter-spacing:-0.03px;">Ein</div>
<div class="c" style="left:357.60px;top:425.67px;width:152.20px;height:34.40px;background:#1c1c1c;border-color:#282828;border-radius:5.5px;"></div>
<div class="c" style="left:363.90px;top:432.07px;width:21.80px;height:21.80px;background:#2e2e2e;border:none;border-radius:50%"></div>
<svg class="i" style="left:367.50px;top:435.67px;width:14.6px;height:14.6px" viewBox="0 0 24 24"><path fill="#bdbdbd" fill-rule="evenodd" d="M3,4H21V7.5H19V20H17V7.5H7V20H5V7.5H3V4M7.5,9H16.5V10.5H7.5V9Z"/></svg>
<div class="t" style="left:392.50px;top:435.00px;font-size:8.2px;line-height:8.2px;color:#e1e1e1;font-weight:700;letter-spacing:-0.05px;">Rollladen links schließen</div>
<div class="t m" style="left:392.50px;top:446.00px;font-size:7.8px;line-height:7.8px;color:#d2d2d2;font-weight:400;letter-spacing:-0.03px;">Aus</div>
<div class="c" style="left:514.40px;top:425.67px;width:152.20px;height:34.40px;background:#1c1c1c;border-color:#282828;border-radius:5.5px;"></div>
<div class="c" style="left:520.70px;top:432.07px;width:21.80px;height:21.80px;background:#342d19;border:none;border-radius:50%"></div>
<svg class="i" style="left:524.30px;top:435.67px;width:14.6px;height:14.6px" viewBox="0 0 24 24"><path fill="#f0bd3a" fill-rule="evenodd" d="M3,4H21V7.5H19V20H17V7.5H7V20H5V7.5H3V4M7.5,9H16.5V10.5H7.5V9Z"/></svg>
<div class="t" style="left:549.30px;top:435.00px;font-size:8.2px;line-height:8.2px;color:#e1e1e1;font-weight:700;letter-spacing:-0.05px;">Rollladen rechts öffnen</div>
<div class="t m" style="left:549.30px;top:446.00px;font-size:7.8px;line-height:7.8px;color:#d2d2d2;font-weight:400;letter-spacing:-0.03px;">Ein</div>
<div class="c" style="left:357.60px;top:465.24px;width:152.20px;height:34.40px;background:#1c1c1c;border-color:#282828;border-radius:5.5px;"></div>
<div class="c" style="left:363.90px;top:471.64px;width:21.80px;height:21.80px;background:#342d19;border:none;border-radius:50%"></div>
<svg class="i" style="left:367.50px;top:475.24px;width:14.6px;height:14.6px" viewBox="0 0 24 24"><path fill="#f0bd3a" fill-rule="evenodd" d="M3,4H21V7.5H19V20H17V7.5H7V20H5V7.5H3V4M7.5,9H16.5V10.5H7.5V9Z"/></svg>
<div class="t" style="left:392.50px;top:475.00px;font-size:8.2px;line-height:8.2px;color:#e1e1e1;font-weight:700;letter-spacing:-0.05px;">Rollladen rechts schließen</div>
<div class="t m" style="left:392.50px;top:486.00px;font-size:7.8px;line-height:7.8px;color:#d2d2d2;font-weight:400;letter-spacing:-0.03px;">Ein</div>
<div class="c" style="left:514.40px;top:465.24px;width:152.20px;height:34.40px;background:#1c1c1c;border-color:#282828;border-radius:5.5px;"></div>
<div class="c" style="left:520.70px;top:471.64px;width:21.80px;height:21.80px;background:#342d19;border:none;border-radius:50%"></div>
<svg class="i" style="left:524.30px;top:475.24px;width:14.6px;height:14.6px" viewBox="0 0 24 24"><path fill="#f0bd3a" fill-rule="evenodd" d="M6,6.9L3.87,4.78L5.28,3.37L7.4,5.5L6,6.9M13,1V4H11V1H13M20.13,4.78L18,6.9L16.6,5.5L18.72,3.37L20.13,4.78M4.5,10.5V12.5H1.5V10.5H4.5M19.5,10.5H22.5V12.5H19.5V10.5M6,20H18A2,2 0 0,1 20,22H4A2,2 0 0,1 6,20M12,5A6,6 0 0,1 18,11V19H6V11A6,6 0 0,1 12,5Z"/></svg>
<div class="t" style="left:549.30px;top:475.00px;font-size:8.2px;line-height:8.2px;color:#e1e1e1;font-weight:700;letter-spacing:-0.05px;">Alarmanlage aktivieren</div>
<div class="t m" style="left:549.30px;top:486.00px;font-size:7.8px;line-height:7.8px;color:#d2d2d2;font-weight:400;letter-spacing:-0.03px;">Ein</div>
<div class="c" style="left:357.60px;top:504.81px;width:152.20px;height:34.40px;background:#1c1c1c;border-color:#282828;border-radius:5.5px;"></div>
<div class="c" style="left:363.90px;top:511.21px;width:21.80px;height:21.80px;background:#342d19;border:none;border-radius:50%"></div>
<svg class="i" style="left:367.50px;top:514.81px;width:14.6px;height:14.6px" viewBox="0 0 24 24"><path fill="#f0bd3a" fill-rule="evenodd" d="M6,6.9L3.87,4.78L5.28,3.37L7.4,5.5L6,6.9M13,1V4H11V1H13M20.13,4.78L18,6.9L16.6,5.5L18.72,3.37L20.13,4.78M4.5,10.5V12.5H1.5V10.5H4.5M19.5,10.5H22.5V12.5H19.5V10.5M6,20H18A2,2 0 0,1 20,22H4A2,2 0 0,1 6,20M12,5A6,6 0 0,1 18,11V19H6V11A6,6 0 0,1 12,5Z"/></svg>
<div class="t" style="left:392.50px;top:515.00px;font-size:8.2px;line-height:8.2px;color:#e1e1e1;font-weight:700;letter-spacing:-0.05px;">Alarmanlage umschalten</div>
<div class="t m" style="left:392.50px;top:525.00px;font-size:7.8px;line-height:7.8px;color:#d2d2d2;font-weight:400;letter-spacing:-0.03px;">Ein</div>
<div class="c" style="left:514.40px;top:504.81px;width:152.20px;height:34.40px;background:#1c1c1c;border-color:#282828;border-radius:5.5px;"></div>
<div class="c" style="left:520.70px;top:511.21px;width:21.80px;height:21.80px;background:#342d19;border:none;border-radius:50%"></div>
<svg class="i" style="left:524.30px;top:514.81px;width:14.6px;height:14.6px" viewBox="0 0 24 24"><path fill="#f0bd3a" fill-rule="evenodd" d="M6,6.9L3.87,4.78L5.28,3.37L7.4,5.5L6,6.9M13,1V4H11V1H13M20.13,4.78L18,6.9L16.6,5.5L18.72,3.37L20.13,4.78M4.5,10.5V12.5H1.5V10.5H4.5M19.5,10.5H22.5V12.5H19.5V10.5M6,20H18A2,2 0 0,1 20,22H4A2,2 0 0,1 6,20M12,5A6,6 0 0,1 18,11V19H6V11A6,6 0 0,1 12,5Z"/></svg>
<div class="t" style="left:549.30px;top:515.00px;font-size:8.2px;line-height:8.2px;color:#e1e1e1;font-weight:700;letter-spacing:-0.05px;">Alarm einschalten (22h)</div>
<div class="t m" style="left:549.30px;top:525.00px;font-size:7.8px;line-height:7.8px;color:#d2d2d2;font-weight:400;letter-spacing:-0.03px;">Ein</div>
<div class="c" style="left:357.60px;top:544.38px;width:152.20px;height:34.40px;background:#1c1c1c;border-color:#282828;border-radius:5.5px;"></div>
<div class="c" style="left:363.90px;top:550.78px;width:21.80px;height:21.80px;background:#342d19;border:none;border-radius:50%"></div>
<svg class="i" style="left:367.50px;top:554.38px;width:14.6px;height:14.6px" viewBox="0 0 24 24"><path fill="#f0bd3a" fill-rule="evenodd" d="M6,6.9L3.87,4.78L5.28,3.37L7.4,5.5L6,6.9M13,1V4H11V1H13M20.13,4.78L18,6.9L16.6,5.5L18.72,3.37L20.13,4.78M4.5,10.5V12.5H1.5V10.5H4.5M19.5,10.5H22.5V12.5H19.5V10.5M6,20H18A2,2 0 0,1 20,22H4A2,2 0 0,1 6,20M12,5A6,6 0 0,1 18,11V19H6V11A6,6 0 0,1 12,5Z"/></svg>
<div class="t" style="left:392.50px;top:554.00px;font-size:8.2px;line-height:8.2px;color:#e1e1e1;font-weight:700;letter-spacing:-0.05px;">Alarmstatus senden</div>
<div class="t m" style="left:392.50px;top:565.00px;font-size:7.8px;line-height:7.8px;color:#d2d2d2;font-weight:400;letter-spacing:-0.03px;">Ein</div>
<div class="c" style="left:685.30px;top:109.40px;width:152.00px;height:35.60px;background:#1c1c1c;border-color:#282828;border-radius:5.5px;"></div>
<svg class="i" style="left:695.20px;top:120.10px;width:14.6px;height:14.6px" viewBox="0 0 24 24"><path fill="#a8a8a8" fill-rule="evenodd" d="M10,20V6.5A3,3 0 0,1 13,3.5H19A3,3 0 0,1 22,6.5V20H22.5V22H2V20H10M12,20H20V6.5A1,1 0 0,0 19,5.5H13A1,1 0 0,0 12,6.5V20M15.5,10.5H18.5V12H17V13H18.5V14.5H15.5V10.5Z"/></svg>
<div class="t" style="left:720.20px;top:120.00px;font-size:8.2px;line-height:8.2px;color:#e1e1e1;font-weight:700;letter-spacing:-0.05px;">Balkontür</div>
<div class="t m" style="left:720.20px;top:131.00px;font-size:7.8px;line-height:7.8px;color:#d2d2d2;font-weight:400;letter-spacing:-0.03px;">Geschlossen</div>
<div class="c" style="left:841.80px;top:109.40px;width:152.00px;height:35.60px;background:#1c1c1c;border-color:#282828;border-radius:5.5px;"></div>
<svg class="i" style="left:851.70px;top:120.10px;width:14.6px;height:14.6px" viewBox="0 0 24 24"><path fill="#a8a8a8" fill-rule="evenodd" d="M10,20V6.5A3,3 0 0,1 13,3.5H19A3,3 0 0,1 22,6.5V20H22.5V22H2V20H10M12,20H20V6.5A1,1 0 0,0 19,5.5H13A1,1 0 0,0 12,6.5V20M15.5,10.5H18.5V12H17V13H18.5V14.5H15.5V10.5Z"/></svg>
<div class="t" style="left:876.70px;top:120.00px;font-size:8.2px;line-height:8.2px;color:#e1e1e1;font-weight:700;letter-spacing:-0.05px;">Fenster</div>
<div class="t m" style="left:876.70px;top:131.00px;font-size:7.8px;line-height:7.8px;color:#d2d2d2;font-weight:400;letter-spacing:-0.03px;">Geschlossen</div>
<div class="c" style="left:685.30px;top:149.50px;width:152.00px;height:74.30px;background:#1c1c1c;border-color:#282828;border-radius:5.5px;"></div>
<svg class="i" style="left:753.85px;top:164.70px;width:14.9px;height:14.9px" viewBox="0 0 24 24"><path fill="#8a78d4" fill-rule="evenodd" d="M3,4H21V7.5H19V20H17V7.5H7V20H5V7.5H3V4M7.5,9H16.5V10.5H7.5V9Z"/></svg>
<div class="t" style="left:611.30px;width:300px;text-align:center;top:193.00px;font-size:8.2px;line-height:8.2px;color:#e1e1e1;font-weight:700;letter-spacing:-0.1px;">Rollladen Rechts</div>
<div class="t m" style="left:611.30px;width:300px;text-align:center;top:204.00px;font-size:7.6px;line-height:7.6px;color:#d0d0d0;font-weight:400;letter-spacing:0px;">Geöffnet · 100 %</div>
<div class="c" style="left:841.80px;top:149.50px;width:152.00px;height:74.30px;background:#1c1c1c;border-color:#282828;border-radius:5.5px;"></div>
<svg class="i" style="left:910.35px;top:164.70px;width:14.9px;height:14.9px" viewBox="0 0 24 24"><path fill="#8a78d4" fill-rule="evenodd" d="M3,4H21V7.5H19V20H17V7.5H7V20H5V7.5H3V4M7.5,9H16.5V10.5H7.5V9Z"/></svg>
<div class="t" style="left:767.80px;width:300px;text-align:center;top:193.00px;font-size:8.2px;line-height:8.2px;color:#e1e1e1;font-weight:700;letter-spacing:-0.1px;">Rollladen links</div>
<div class="t m" style="left:767.80px;width:300px;text-align:center;top:204.00px;font-size:7.6px;line-height:7.6px;color:#d0d0d0;font-weight:400;letter-spacing:0px;">Geöffnet · 100 %</div>
</body></html>
